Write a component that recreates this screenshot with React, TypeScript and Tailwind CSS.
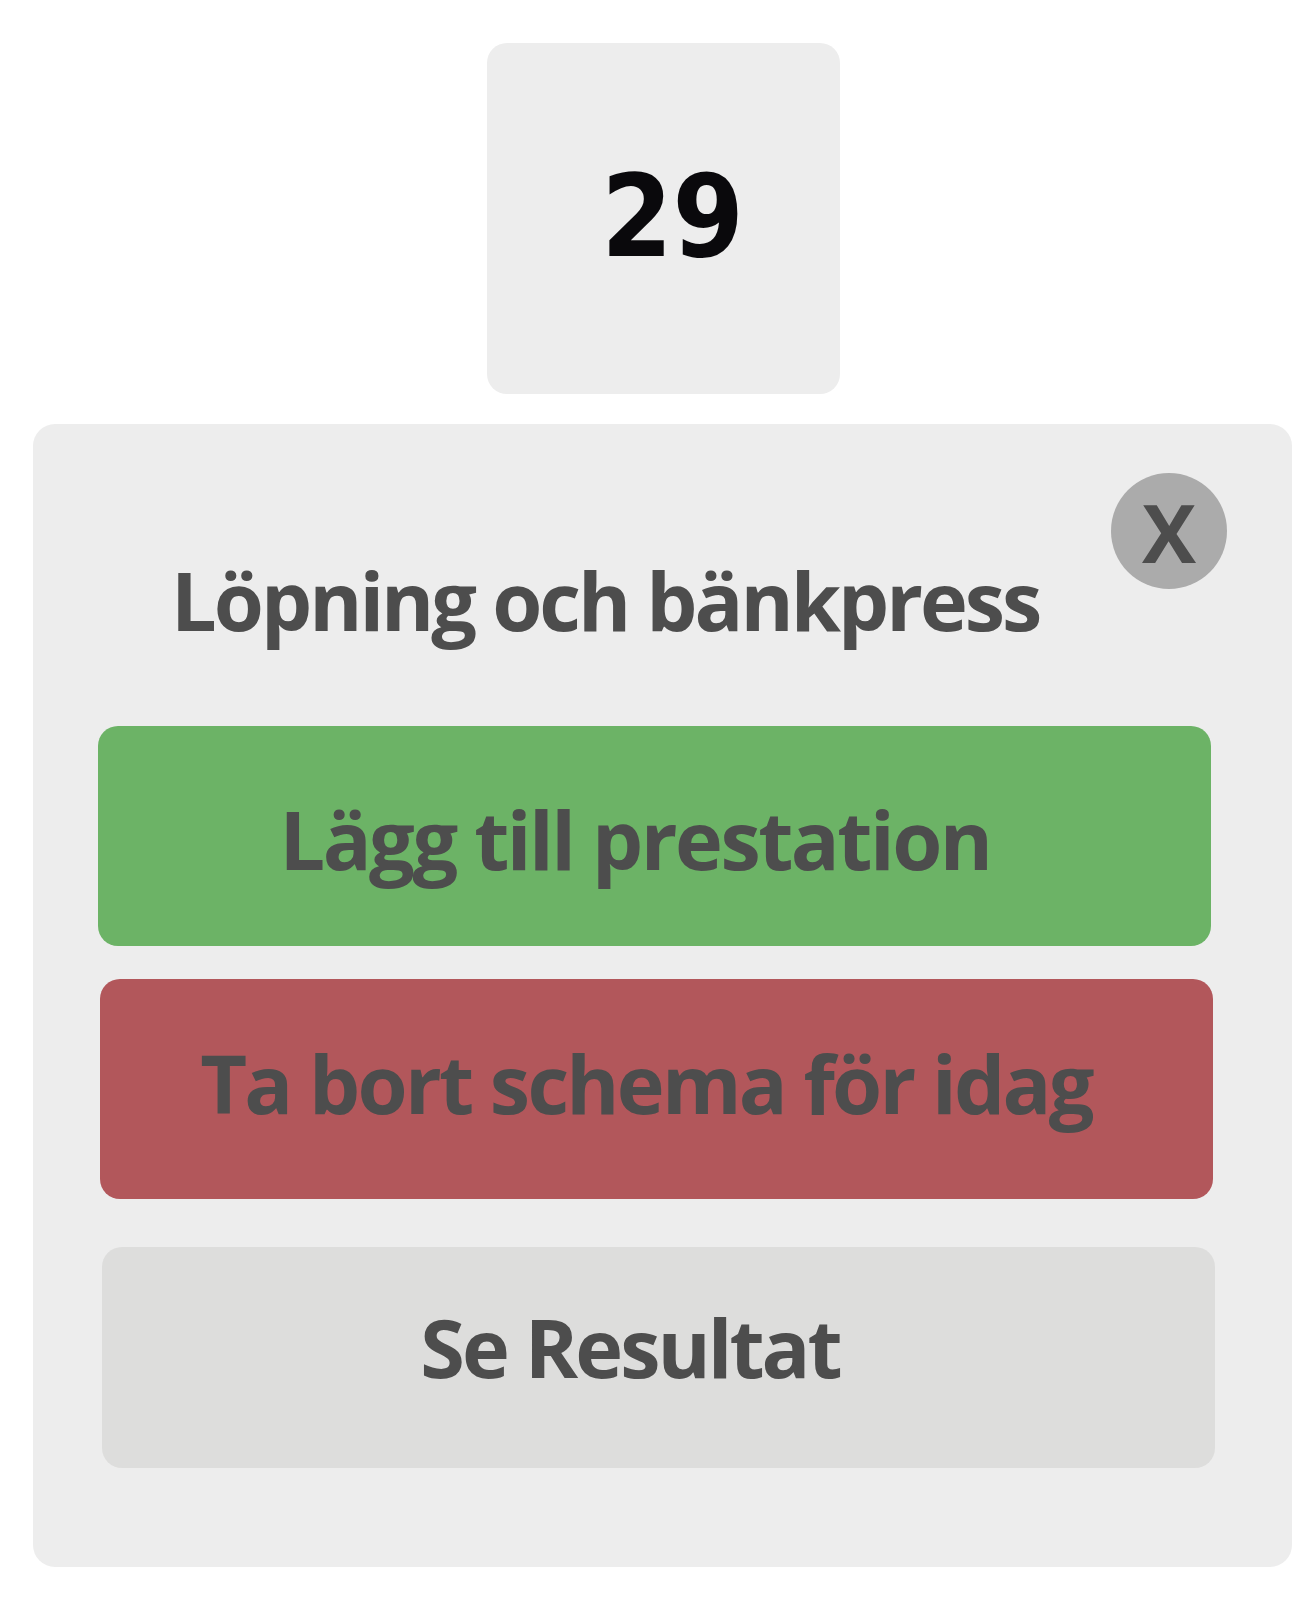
export default function App() {
  const font = { fontFamily: '"Open Sans", "Noto Sans", sans-serif' };
  return (
    <div className="w-[1313px] h-[1603px] bg-white overflow-hidden" style={font}>
      {/* dag */}
      <div className="ml-[487px] mt-[43px] w-[353px] h-[351px] rounded-[20px] bg-[#ededed] flex items-center justify-center">
        <span
          className="text-[114px] font-bold leading-none text-[#0a090c] ml-[18px] mb-[4px]"
          style={{ fontFamily: '"DejaVu Sans Condensed", "DejaVu Sans", sans-serif', fontStretch: "condensed" }}
        >
          29
        </span>
      </div>

      {/* kort */}
      <div className="ml-[33px] mt-[30px] w-[1259px] h-[1143px] rounded-[22px] bg-[#ededed] flex flex-col">
        <div className="flex items-start pl-[138px] pr-[65px] pt-[49px]">
          <h2 className="mt-[86px] text-[81px] font-bold leading-none text-[#4d4d4d] tracking-[-3px]">
            Löpning och bänkpress
          </h2>
          <button className="ml-auto w-[116px] h-[116px] rounded-full bg-[#ababab] flex items-center justify-center text-[81px] font-bold leading-none text-[#4d4d4d]">
            X
          </button>
        </div>

        <button className="ml-[65px] mt-[86px] w-[1113px] h-[220px] pr-[39px] pt-[4px] rounded-[20px] bg-[#6cb366] flex items-center justify-center text-[81px] font-bold leading-none text-[#4d4d4d] tracking-[-2.5px]">
          Lägg till prestation
        </button>
        <button className="ml-[67px] mt-[33px] w-[1113px] h-[220px] pr-[21px] pb-[14px] rounded-[20px] bg-[#b2575b] flex items-center justify-center text-[81px] font-bold leading-none text-[#4d4d4d] tracking-[-2.7px]">
          Ta bort schema för idag
        </button>
        <button className="ml-[69px] mt-[48px] w-[1113px] h-[221px] pr-[57px] pb-[22px] rounded-[20px] bg-[#dddddc] flex items-center justify-center text-[81px] font-bold leading-none text-[#4d4d4d] tracking-[-3px]">
          Se Resultat
        </button>
      </div>
    </div>
  );
}
